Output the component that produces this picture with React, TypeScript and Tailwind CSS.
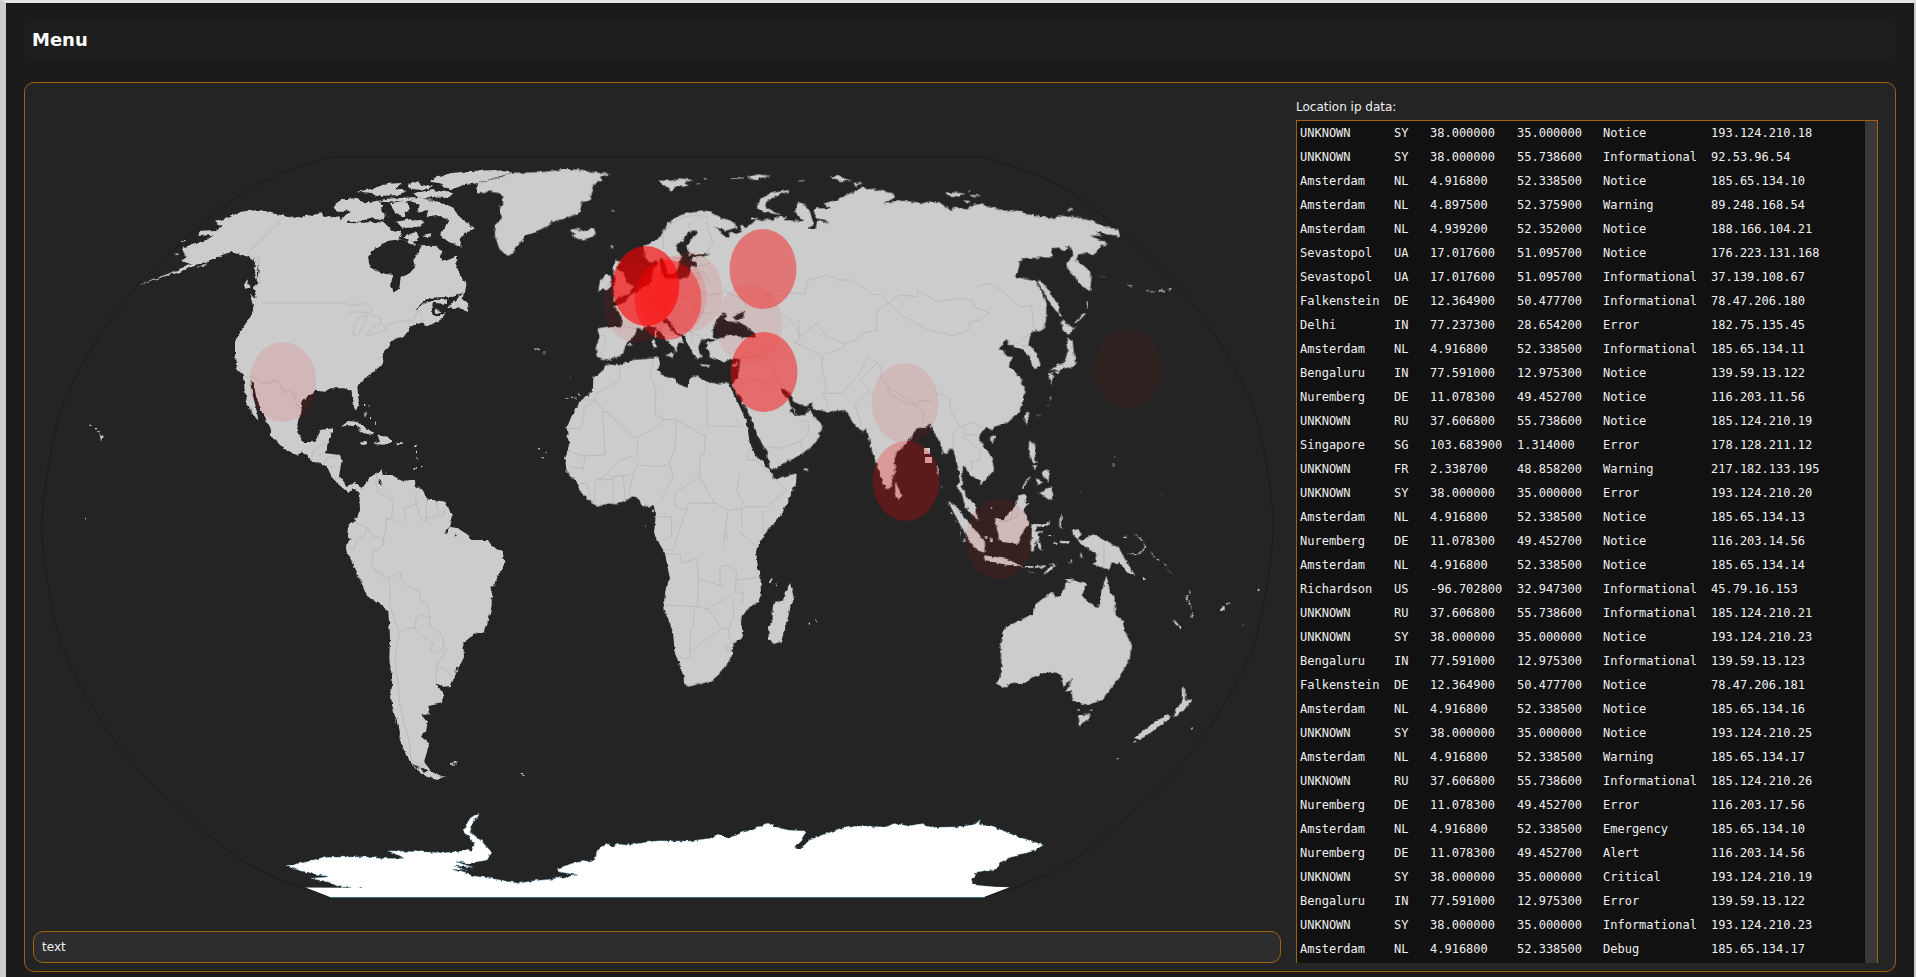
import React from "react";

type Row = [string, string, string, string, string, string];

const rows: Row[] = [
  ["UNKNOWN", "SY", "38.000000", "35.000000", "Notice", "193.124.210.18"],
  ["UNKNOWN", "SY", "38.000000", "55.738600", "Informational", "92.53.96.54"],
  ["Amsterdam", "NL", "4.916800", "52.338500", "Notice", "185.65.134.10"],
  ["Amsterdam", "NL", "4.897500", "52.375900", "Warning", "89.248.168.54"],
  ["Amsterdam", "NL", "4.939200", "52.352000", "Notice", "188.166.104.21"],
  ["Sevastopol", "UA", "17.017600", "51.095700", "Notice", "176.223.131.168"],
  ["Sevastopol", "UA", "17.017600", "51.095700", "Informational", "37.139.108.67"],
  ["Falkenstein", "DE", "12.364900", "50.477700", "Informational", "78.47.206.180"],
  ["Delhi", "IN", "77.237300", "28.654200", "Error", "182.75.135.45"],
  ["Amsterdam", "NL", "4.916800", "52.338500", "Informational", "185.65.134.11"],
  ["Bengaluru", "IN", "77.591000", "12.975300", "Notice", "139.59.13.122"],
  ["Nuremberg", "DE", "11.078300", "49.452700", "Notice", "116.203.11.56"],
  ["UNKNOWN", "RU", "37.606800", "55.738600", "Notice", "185.124.210.19"],
  ["Singapore", "SG", "103.683900", "1.314000", "Error", "178.128.211.12"],
  ["UNKNOWN", "FR", "2.338700", "48.858200", "Warning", "217.182.133.195"],
  ["UNKNOWN", "SY", "38.000000", "35.000000", "Error", "193.124.210.20"],
  ["Amsterdam", "NL", "4.916800", "52.338500", "Notice", "185.65.134.13"],
  ["Nuremberg", "DE", "11.078300", "49.452700", "Notice", "116.203.14.56"],
  ["Amsterdam", "NL", "4.916800", "52.338500", "Notice", "185.65.134.14"],
  ["Richardson", "US", "-96.702800", "32.947300", "Informational", "45.79.16.153"],
  ["UNKNOWN", "RU", "37.606800", "55.738600", "Informational", "185.124.210.21"],
  ["UNKNOWN", "SY", "38.000000", "35.000000", "Notice", "193.124.210.23"],
  ["Bengaluru", "IN", "77.591000", "12.975300", "Informational", "139.59.13.123"],
  ["Falkenstein", "DE", "12.364900", "50.477700", "Notice", "78.47.206.181"],
  ["Amsterdam", "NL", "4.916800", "52.338500", "Notice", "185.65.134.16"],
  ["UNKNOWN", "SY", "38.000000", "35.000000", "Notice", "193.124.210.25"],
  ["Amsterdam", "NL", "4.916800", "52.338500", "Warning", "185.65.134.17"],
  ["UNKNOWN", "RU", "37.606800", "55.738600", "Informational", "185.124.210.26"],
  ["Nuremberg", "DE", "11.078300", "49.452700", "Error", "116.203.17.56"],
  ["Amsterdam", "NL", "4.916800", "52.338500", "Emergency", "185.65.134.10"],
  ["Nuremberg", "DE", "11.078300", "49.452700", "Alert", "116.203.14.56"],
  ["UNKNOWN", "SY", "38.000000", "35.000000", "Critical", "193.124.210.19"],
  ["Bengaluru", "IN", "77.591000", "12.975300", "Error", "139.59.13.122"],
  ["UNKNOWN", "SY", "38.000000", "35.000000", "Informational", "193.124.210.23"],
  ["Amsterdam", "NL", "4.916800", "52.338500", "Debug", "185.65.134.17"],
];

// Each region keeps its own local frame at three units per map unit.
type Region = { at: string; land: string[]; sea?: string[]; borders?: string[] };

const regions: Region[] = [
  {
    // North America
    at: "translate(40 140) scale(0.33333)",
    land: [
      "M640,210 L690,218 735,228 765,236 800,228 845,220 850,230 885,228 905,238 925,240 920,248 950,250 1000,245 1045,250 1085,280 1075,295 1100,305 1120,290 1150,318 1190,315 1205,335 1200,355 1215,362 1240,340 1248,350 1250,380 1262,408 1280,430 1275,455 1240,470 1170,473 1150,485 1118,515 1155,490 1185,480 1225,478 1220,492 1180,488 1175,500 1178,525 1195,530 1215,520 1210,535 1165,558 1152,560 1155,545 1110,560 1098,585 1060,600 1045,620 1030,640 1025,675 1000,695 960,725 952,740 957,790 948,812 938,790 935,755 920,745 870,745 855,755 825,752 795,775 783,790 785,815 772,850 775,880 790,907 828,905 842,870 880,865 868,895 855,940 900,945 905,960 897,1010 920,1038 945,1028 970,1050 965,1068 940,1045 925,1058 880,1020 860,978 820,965 790,937 770,945 730,925 690,885 692,865 665,815 650,775 640,730 630,720 637,760 650,810 655,842 640,825 617,785 620,775 613,745 612,705 590,685 585,650 585,605 600,575 635,525 640,500 630,465 650,475 640,440 652,430 640,400 645,370 628,350 600,345 580,335 560,340 510,360 460,375 425,363 440,350 430,340 428,322 500,300 520,285 475,288 480,272 530,270 545,262 525,245 560,235 600,215Z",
      "M295,436 L330,424 380,403 430,383 470,364 510,350 520,356 470,374 420,396 370,410 330,426Z",
      "M402,342 L416,340 414,346Z M422,304 L434,302 432,308Z M468,382 L500,370 488,382Z M480,382 500,376 490,384Z",
      "M878,200 L910,178 950,175 975,190 1010,182 1030,195 1022,215 1050,235 1040,243 990,235 950,247 905,237 930,212 890,212Z",
      "M950,155 L990,148 1040,132 1090,128 1062,143 1100,152 1080,165 1010,168 990,158Z",
      "M1010,182 L1040,176 1120,172 1180,178 1120,182 1060,184Z",
      "M1170,125 L1190,112 1230,100 1290,93 1370,90 1415,98 1370,112 1310,130 1270,136 1230,150 1200,130Z",
      "M1120,158 L1180,150 1240,160 1225,174 1130,170Z M1100,135 L1130,122 1145,135 1180,140 1150,150 1110,146Z",
      "M1105,185 L1150,178 1200,185 1240,205 1260,235 1305,265 1275,280 1258,300 1262,320 1225,305 1200,285 1215,262 1225,240 1190,225 1160,230 1165,210 1130,215 1140,195Z",
      "M1050,190 L1095,182 1110,205 1090,230 1065,220Z M1070,245 L1110,238 1155,245 1130,264 1085,262Z M1090,292 L1125,275 1135,295 1110,303Z",
      "M1150,285 L1175,280 1165,295Z M1180,190 1215,195 1200,215Z",
      "M1225,503 L1250,475 1272,455 1268,480 1285,490 1280,517 1265,505 1240,507Z M1185,505 1205,515 1190,520Z",
      "M612,435 L622,418 628,440 616,447Z",
      "M903,860 L925,843 955,847 1002,880 998,886 970,880 945,855 915,858Z",
      "M1012,886 L1045,890 1060,905 1035,914 1000,912 1020,905Z M960,907 h18 v7 h-14Z M1070,907 h18 v6 h-18Z",
      "M178,882 L192,890 183,900Z M148,854 h6 v4 h-6Z M165,864 h6 v4 h-6Z M173,874 h10 v3 h-10Z",
      "M972,792 h4 v8 h-4Z M985,796 h3 v6 h-3Z M973,818 h4 v12 h-4Z M990,830 h3 v8 h-3Z M1005,848 h3 v6 h-3Z M1125,915 h3 v6 h-3Z M1128,935 h3 v8 h-3Z M1131,952 h3 v6 h-3Z M1143,978 h4 v4 h-4Z M1120,985 h8 v4 h-8Z M1485,627 h12 v4 h-12Z M1495,924 h4 v4 h-4Z M135,1134 h4 v4 h-4Z",
    ],
    sea: [
      "M985,355 L1005,325 1045,302 1085,298 1110,312 1145,318 1120,360 1125,380 1110,400 1082,412 1078,445 1062,458 1050,438 1060,405 1020,398 990,382Z",
      "M1130,318 L1118,305 1150,298 1190,302 1215,318 1245,320 1248,350 1215,364 1200,352 1205,335 1188,318 1145,316Z",
      "M1035,225 L1060,240 1075,262 1100,270 1060,275 1030,245 Z",
      "M640,350 L646,400 638,440 634,400Z M652,360 L656,395 650,420Z",
      "M1310,142 L1370,148 1390,160 1385,153 1330,140Z",
    ],
    borders: [
      "M622,340 L735,228 M622,340 L640,352 660,350 652,380 662,430 640,445 M665,488 L912,488 935,498 975,488 995,505 990,522 960,515 925,518 M940,585 L942,560 955,530 985,528 970,550 955,585Z M995,525 L1020,532 1025,550 1000,560 978,588 1040,568 1030,558 1075,545 1120,540 1130,515 1145,515 1145,548",
      "M613,712 L635,710 670,730 695,728 700,720 715,725 732,758 750,752 762,760 770,795 785,805",
      "M815,950 L822,930 845,912 860,912 M832,945 L850,940 M850,975 L862,955 900,945 M868,985 L885,975 M900,1015 L880,1018",
    ],
  },
  {
    // South America
    at: "translate(320 420) scale(0.33333)",
    land: [
      "M118,212 L135,195 145,175 185,150 188,165 215,165 245,182 288,180 285,195 305,210 325,238 375,245 385,262 397,295 390,320 412,325 440,338 455,360 500,360 530,388 548,393 553,430 546,450 530,470 522,497 515,500 515,560 505,600 490,635 465,638 430,670 432,712 415,745 392,798 370,800 348,790 372,825 365,850 325,858 330,883 305,885 320,905 315,935 303,950 327,970 320,1000 312,1025 335,1055 370,1070 352,1080 320,1070 285,1045 260,1010 240,960 225,890 213,838 217,780 208,720 210,650 205,575 185,555 150,535 135,515 110,455 95,420 80,400 78,375 92,360 82,345 85,315 100,305 120,272Z",
      "M392,1026 h9 v8 h-9Z M404,1025 L414,1027 404,1035Z M598,1061 L608,1062 618,1070 606,1066Z M362,1068 L378,1070 362,1073Z M315,903 h8 v6 h-8Z",
      "M655,84 h4 v4 h-4Z M675,95 h5 v5 h-5Z M662,112 h10 v3 h-10Z M147,782 h3 v3 h-3Z M195,155 h5 v3 h-5Z M268,180 h18 v8 h-18Z",
    ],
    sea: [
      "M176,178 L184,180 184,195 176,190Z M386,318 L374,342 383,340Z M408,338 L404,352 410,352Z M410,740 L404,760 416,742Z M232,895 L240,940 236,960 228,915Z M245,985 L262,1012 255,1010Z M275,1030 L300,1045 290,1046Z M305,1040 L325,1055 310,1058Z",
    ],
    borders: [
      "M170,165 L168,190 175,220 215,235 218,265 215,295 195,300 200,320 192,350 190,378 160,395 155,430 168,455 190,460 190,472 212,473 240,455 245,480 270,500 297,512 302,543 318,548 328,570 328,595 M215,295 L240,310 260,290 252,265 290,252 285,225 305,205 M290,255 L298,280 305,300 320,302 318,270 322,240 M320,295 L350,288 355,270 345,240 M350,288 L368,288 375,265 M195,300 L205,295",
      "M100,305 L140,322 135,345 110,360 102,388 85,380 M140,322 L162,350 190,355 190,378 M205,473 L210,510 210,560 225,600 238,640 228,690 225,730 235,790 238,850 250,900 262,940 270,980 272,1020 310,1035 M238,635 L260,625 285,625 288,595 300,585 328,590 330,622 358,635 370,660 370,685 350,700 332,695 338,668 300,645 285,625 M370,675 L380,690 350,735 348,790 M350,738 L375,748 398,770",
    ],
  },
  {
    // Europe, Asia and Greenland
    at: "translate(480 140) scale(0.33333)",
    land: [
      "M-10,130 L60,112 95,98 130,98 190,96 250,88 310,90 345,97 392,102 360,110 365,120 340,135 330,165 335,180 305,186 300,215 270,232 215,245 205,258 140,285 110,320 92,347 60,332 45,290 45,255 65,235 60,200 70,185 62,160 30,155 -10,157Z",
      "M268,270 L290,266 310,273 342,265 348,282 308,302 278,290 285,280Z",
      "M535,122 L575,122 600,115 640,120 612,128 628,140 590,140 575,152 555,140Z M650,128 h10 v3 h-10Z M672,115 h8 v3 h-8Z M753,112 L790,112 790,115 755,116Z M800,112 L835,103 870,108 850,112 820,120Z",
      "M928,150 L870,160 840,178 830,205 858,218 905,225 880,212 855,202 860,185 890,165 925,156Z M815,232 h14 v6 h-14Z",
      "M1050,110 L1075,108 1113,122 1080,123Z M1120,128 L1150,130 1125,137Z M955,122 h16 v2 h-16Z",
      "M490,320 L530,300 545,283 560,255 580,235 620,218 655,212 690,216 720,232 760,245 770,262 740,272 700,260 715,268 735,292 752,292 745,280 785,277 780,255 800,265 812,250 830,240 880,238 900,230 925,230 910,240 970,243 945,215 955,185 978,195 990,215 1000,250 985,264 1010,266 1015,240 1048,252 1035,240 1012,235 1000,215 1005,205 1052,205 1030,190 1070,180 1110,160 1145,142 1200,152 1240,160 1245,172 1210,192 1265,182 1340,190 1350,183 1375,185 1415,213 1425,203 1465,208 1475,195 1500,192 1540,202 1570,212 1610,210 1640,222 1690,230 1725,237 1730,226 1790,232 1830,242 1880,262 1915,268 1920,290 1880,282 1845,270 1865,288 1830,285 1885,312 1862,318 1840,345 1825,340 1795,342 1788,362 1815,380 1835,408 1830,458 1795,425 1765,388 1762,370 1778,345 1770,318 1757,315 1765,325 1755,335 1735,322 1715,325 1718,352 1625,355 1612,390 1605,410 1640,418 1670,425 1690,465 1700,490 1698,540 1690,568 1675,575 1662,570 1650,590 1645,615 1670,640 1682,675 1660,687 1650,650 1630,632 1620,625 1600,615 1585,615 1588,605 1578,598 1556,628 1572,632 1575,645 1600,648 1587,675 1620,712 1628,735 1634,745 1630,780 1615,820 1580,850 1540,860 1535,872 1520,862 1500,880 1498,902 1535,950 1542,990 1520,1015 1502,1040 1500,1022 1470,1005 1450,975 1446,1010 1445,1040 1460,1070 1485,1090 1495,1140 1480,1130 1455,1098 1445,1060 1432,1045 1440,1010 1432,975 1420,930 1410,925 1400,942 1388,938 1385,915 1360,875 1350,850 1340,860 1310,865 1280,910 1250,940 1243,960 1245,1000 1230,1045 1217,1048 1195,990 1175,930 1160,865 1147,875 1120,850 1095,810 1045,815 1000,808 985,808 975,825 950,828 935,800 930,815 945,828 960,830 990,812 1000,830 1030,855 1010,900 990,925 960,945 920,965 880,988 870,985 860,935 830,880 815,840 795,800 775,765 762,745 752,732 770,715 778,690 780,657 755,655 735,665 700,657 680,640 680,610 700,600 690,595 662,600 655,625 665,655 645,655 635,630 622,610 615,590 590,575 570,545 555,535 550,545 575,570 605,595 612,608 595,605 590,630 582,640 585,625 560,600 530,565 510,555 485,568 470,563 468,580 435,620 430,640 395,658 380,662 350,650 348,620 358,590 352,565 385,560 425,563 428,540 415,515 400,500 440,485 445,470 470,455 495,440 515,425 518,390 535,368 530,362 505,370 495,350Z",
      "M400,490 L415,470 452,462 460,440 440,425 428,395 410,392 420,365 402,362 400,400 410,425 400,440 402,455Z M355,453 L360,420 375,405 392,407 395,425 388,445Z",
      "M518,600 h10 v22 h-10Z M524,570 h6 v20 h-6Z M555,642 L580,640 580,655Z M660,672 L690,675 690,680 665,678Z M752,678 L775,666 768,680Z M445,612 h8 v5 h-8Z",
      "M1245,1025 L1265,1062 1255,1080 1246,1070Z M1372,980 h4 v22 h-4Z M1386,1040 h3 v3 h-3Z",
      "M1745,538 L1762,552 1786,562 1770,582 1748,575Z M1760,592 L1778,605 1782,640 1790,672 1770,684 1755,680 1740,694 1722,688 1702,698 1725,680 1750,668 1766,640Z M1703,700 L1720,700 1714,732 1708,715Z M1722,696 L1742,692 1732,704Z",
      "M1670,418 L1685,425 1705,450 1735,495 1738,525 1710,490Z M1722,500 L1748,530 1738,528Z",
      "M1640,815 L1648,818 1640,857 1633,840Z M1530,893 L1548,885 1536,910Z M1648,905 L1664,910 1668,935 1662,960 1678,968 1655,966 1645,930Z M1655,975 L1672,980 1665,990Z M1685,995 L1710,990 1705,1025 1690,1010Z M1670,1015 L1690,1025 1675,1035Z M1678,1062 L1712,1038 1720,1065 1714,1082 1695,1068Z M1625,1042 L1648,1010 1650,1012 1630,1045Z",
      "M1398,157 L1455,160 1440,170 1408,167Z M1470,165 h30 v4 h-30Z M1445,180 L1472,184 1460,190Z M1465,150 h5 v4 h-5Z M1757,210 L1770,206 1782,211Z M1738,300 h18 v3 h-18Z",
      "M1860,405 L1885,412 1870,410Z M1945,435 h12 v3 h-12Z M1998,448 h6 v3 h-6Z M2012,455 h14 v2 h-14Z M2036,450 h20 v4 h-20Z M2066,445 h10 v4 h-10Z M1820,485 h3 v20 h-3Z M1810,520 L1818,520 1790,550 1785,550Z M1710,770 h3 v12 h-3Z M1702,795 h4 v4 h-4Z M1668,825 h12 v2 h-12Z M1905,950 h3 v3 h-3Z M1898,973 h4 v4 h-4Z M2046,1064 h3 v3 h-3Z M1803,1055 h3 v3 h-3Z",
      "M165,626 h14 v5 h-14Z M190,638 h6 v3 h-6Z M266,708 h4 v3 h-4Z M393,315 h6 v10 h-6Z M393,210 h8 v3 h-8Z M972,986 h12 v4 h-12Z",
    ],
    sea: [
      "M625,275 L648,275 650,282 632,300 622,318 626,345 655,343 692,342 665,350 640,352 632,362 650,368 650,382 635,376 628,405 605,417 580,417 555,416 545,395 538,360 545,352 558,378 562,400 575,402 590,395 598,370 605,345 590,332 592,312 615,295Z",
      "M700,590 L698,565 715,530 735,520 742,530 730,535 750,548 775,545 800,560 825,580 828,592 790,592 745,585 712,597Z M758,528 L797,513 785,535 768,542Z",
      "M905,745 L925,752 940,785 975,800 995,787 1000,808 985,806 975,825 950,826 945,808 932,800 925,775 908,762Z",
      "M682,600 L700,597 710,600 690,606Z M668,655 L675,615 665,605 690,640 685,655Z",
    ],
    borders: [
      "M550,325 L550,280 575,250 610,232 650,225 685,232 M632,280 L625,250 M680,240 L690,285 700,310 680,335 M640,400 L670,395 690,430 M650,380 L690,370 M670,400 L640,430 M640,450 L690,465 730,460 740,440 M575,460 L620,475 650,490 640,515 600,530 M640,515 L690,520 M430,560 L470,566 M362,585 L378,590 370,625 360,645 M520,500 L560,510 M500,430 L510,490 M530,430 L535,480 M580,430 L590,465 M735,455 L790,480 800,500 M615,565 L660,590 M630,570 L640,610",
      "M870,490 L862,465 900,450 925,458 975,462 985,420 1040,405 1075,420 1115,420 1180,465 1200,462 1225,488 1260,465 1310,470 1315,452 1370,485 1440,475 1480,482 1480,500 1528,518 1500,540 1470,545 1468,568 1420,587 1345,570 1300,545 1270,530 1225,488 M1490,440 L1530,430 1570,455 1620,500 1655,498 1660,560 M1225,488 L1190,515 1190,570 1145,580 1130,600 1095,610 M955,540 L960,590 1010,550 1040,590 1095,610 1090,625 1040,640 M905,520 L945,555 960,595 945,610 M890,625 L920,650 M940,605 L1030,650 1025,680 1040,745 1030,760 1048,810 M1030,760 L1085,760 1140,700 1165,650 1205,680 1200,710 1225,740 1310,795 1320,780 1350,785 M1225,740 L1225,760 1280,790 1310,795 M1145,860 L1125,795 1170,750 1140,720 1195,665",
      "M1310,800 L1330,815 1330,850 M1350,785 L1375,760 1410,775 1410,810 1440,860 1480,845 1505,865 M1440,860 L1420,880 1420,930 M1450,860 L1450,890 1500,930 1500,960 1475,965 1475,990 M1455,885 L1490,885 M1610,610 L1650,580 M1625,615 L1645,620",
      "M775,655 L850,645 880,680 890,720 905,745 M775,735 L830,715 890,750 M860,920 L900,925 960,905 985,880 985,845 960,840 M960,905 L970,930 M850,620 L885,630",
      "M1556,1145 L1590,1140 1605,1105",
    ],
  },
  {
    // Africa
    at: "translate(550 340) scale(0.33333)",
    land: [
      "M167,72 L205,76 250,60 310,55 325,50 330,72 323,92 345,110 375,115 382,130 410,143 420,115 440,107 470,125 510,133 535,128 545,150 560,180 590,245 598,300 615,345 640,368 660,390 672,417 740,400 738,430 715,480 690,530 645,580 630,605 618,635 625,690 632,710 632,765 625,785 590,810 572,838 577,870 575,895 548,913 545,950 510,1000 485,1023 415,1040 402,1030 400,1000 375,940 368,870 340,805 347,745 360,715 352,680 345,640 325,605 312,578 318,520 310,498 280,500 265,475 245,472 200,493 175,490 140,500 90,455 80,425 50,395 45,355 57,315 50,265 70,215 95,180 128,155 130,115 160,90Z",
      "M720,728 L732,775 722,800 705,870 692,905 672,912 657,900 655,868 668,840 668,795 700,775Z",
      "M45,172 h10 v4 h-10Z M60,168 h6 v6 h-6Z M72,172 h8 v3 h-8Z M84,160 h5 v6 h-5Z M306,510 h6 v6 h-6Z M286,556 h4 v4 h-4Z M776,848 h6 v6 h-6Z M797,838 h5 v5 h-5Z M660,718 h4 v8 h-4Z M676,734 h5 v4 h-5Z M762,386 h12 v4 h-12Z",
    ],
    sea: ["M543,150 L562,180 566,160 572,172 562,186Z"],
    borders: [
      "M208,76 L210,120 165,145 137,162 137,185 103,200 100,238 93,265 50,266 M137,185 L255,295 318,262 342,238 315,225 318,150 300,110 310,60 M137,180 L103,180 M158,215 L165,345 100,348 60,335 M158,215 L175,218 M263,297 L262,345 210,360 175,395 165,408 M342,238 L380,240 375,325 358,370 330,380 260,375 250,400 240,440 236,470 M380,240 L465,288 463,340 450,350 448,410 375,460 M470,128 L472,258 575,260 M463,288 L470,285 M600,320 L590,360 620,360 650,390 710,450 650,500 585,500 560,450 570,400",
      "M190,410 L190,490 M220,408 L225,475 M190,410 L240,405 M135,420 L135,490 M60,380 L100,385 105,350 M90,430 L110,430 120,470 M165,408 L140,420 190,418 M330,485 L370,410 358,370 M375,460 L375,500 410,510 385,580 370,630 345,628 M320,530 L365,530 365,590 340,600 M410,510 L415,490 500,490 535,510 525,575 520,620 M448,410 L495,490 M535,510 L575,505 M575,500 L575,560 M568,575 L620,620 M638,510 L640,580",
      "M345,642 L390,642 395,670 440,655 445,715 520,740 M445,715 L443,800 342,795 M443,800 L475,808 550,760 M510,740 L510,680 530,675 560,695 555,755 580,760 575,795 M560,720 L630,712 M475,808 L515,865 535,868 552,830 550,790 M433,808 L430,865 422,865 420,950 405,958 390,950 M425,932 L450,912 515,865 M535,868 L543,910 M530,920 L540,918 543,935 530,935Z M515,590 L530,580 532,600",
    ],
  },
  {
    // Oceania
    at: "translate(900 500) scale(0.33333)",
    land: [
      "M305,565 L290,550 305,515 303,460 300,430 315,385 350,365 395,345 410,310 455,275 470,290 485,287 500,247 525,240 562,250 545,287 590,325 600,310 610,255 620,228 630,275 643,290 647,345 668,362 672,390 693,430 690,475 660,530 605,600 565,615 545,610 518,605 515,572 495,575 518,535 490,562 483,525 460,515 430,520 400,530 375,548 335,550Z",
      "M538,645 L572,643 555,668 535,680Z M495,238 L522,236 515,243 498,243Z",
      "M848,557 L856,570 855,598 878,600 850,632 822,652 828,625 848,605Z M803,642 L812,650 770,685 720,720 702,713 745,680Z M700,722 h8 v5 h-8Z",
      "M515,90 L535,88 545,105 530,112 545,122 580,103 615,122 655,140 668,165 682,190 705,225 685,218 660,190 635,187 630,207 610,205 578,192 590,180 588,160 548,137 540,125 520,105Z",
      "M680,160 L710,163 728,150 733,128 737,140 725,158 705,166Z M670,107 h10 v4 h-10Z M700,100 L725,118 732,128 722,120Z",
      "M285,55 L312,58 350,10 358,-15 375,-18 380,8 388,10 370,30 387,68 372,90 355,132 335,130 300,125 290,85Z",
      "M143,3 L165,15 200,60 238,105 255,125 253,158 230,150 200,110 165,45Z",
      "M250,165 L320,176 345,188 372,202 325,195 255,180Z M375,198 L400,198 400,203 375,203Z M405,198 L438,196 435,202 405,203Z M445,192 L475,188 460,195Z M430,225 L445,205 470,195 455,210Z M385,210 L400,220 388,216Z",
      "M398,72 L440,72 450,60 448,76 412,80 405,95 432,92 412,102 428,152 418,148 408,120 400,157 393,150 395,95Z",
      "M460,125 h10 v6 h-10Z M480,122 L508,124 505,131 480,128Z M478,55 h5 v30 h-5Z M484,45 h4 v14 h-4Z M541,158 h5 v16 h-5Z M508,182 L515,178 512,192Z M445,105 h14 v3 h-14Z",
      "M750,152 L765,175 758,170Z M770,172 L780,182 773,180Z M790,185 L805,200 795,195Z M800,205 L822,228 808,215Z M728,235 h8 v5 h-8Z M858,285 h5 v16 h-5Z M868,270 h3 v10 h-3Z M866,300 h5 v14 h-5Z M873,320 h3 v8 h-3Z M875,340 h3 v12 h-3Z M822,358 L845,385 840,388 824,370Z M962,322 h12 v9 h-12Z M978,312 L992,305 985,314Z M1073,267 h6 v4 h-6Z M1025,372 h4 v3 h-4Z M873,682 h5 v6 h-5Z M651,774 h5 v4 h-5Z M535,627 h4 v5 h-4Z M572,628 h4 v8 h-4Z",
      "M152,40 h5 v5 h-5Z M165,60 L172,70 168,70Z M178,90 L186,103 182,103Z M192,118 h4 v8 h-4Z M270,115 h8 v8 h-8Z M256,108 h6 v8 h-6Z M275,22 h5 v4 h-5Z",
    ],
    borders: ["M612,122 L612,205", "M297,62 L325,62 350,50 355,20"],
  },
];

type Point = [number, number];

const leftTop: Point[] = [
  [330, 157], [283, 173], [240, 195], [197, 229], [137, 286], [97, 340], [65, 400], [50, 457], [42, 527],
];
const leftSide: Point[] = [
  ...leftTop,
  ...leftTop.slice(0, -1).reverse().map(([x, y]): Point => [x, 1054 - y]),
];
const rightSide: Point[] = leftSide.map(([x, y]): Point => [1315 - x, 1054 - y]);

// Catmull-Rom spline through the points, written as cubic segments.
function spline(pts: Point[]) {
  let d = "";
  for (let i = 0; i < pts.length - 1; i++) {
    const a = pts[i - 1] ?? pts[i];
    const b = pts[i];
    const c = pts[i + 1];
    const e = pts[i + 2] ?? c;
    d += ` C${b[0] + (c[0] - a[0]) / 6},${b[1] + (c[1] - a[1]) / 6} ${c[0] - (e[0] - b[0]) / 6},${c[1] - (e[1] - b[1]) / 6} ${c[0]},${c[1]}`;
  }
  return d;
}
const outline = `M330,157${spline(leftSide)} L985,897${spline(rightSide)} Z`;

const hits = [
  { x: 283, y: 382, a: 0.1 },
  { x: 637, y: 303, a: 0.09 },
  { x: 689, y: 292, a: 0.09 },
  { x: 673, y: 296, a: 0.12 },
  { x: 668, y: 300, a: 0.4 },
  { x: 646, y: 286, a: 0.62 },
  { x: 749, y: 324, a: 0.07 },
  { x: 763, y: 269, a: 0.42 },
  { x: 764, y: 372, a: 0.47 },
  { x: 905, y: 403, a: 0.09 },
  { x: 906, y: 481, a: 0.25 },
  { x: 999, y: 539, a: 0.09 },
  { x: 1128, y: 369, a: 0.06 },
];

function WorldMap() {
  return (
    <svg viewBox="33 91 1248 832" className="block h-auto w-full" role="img" aria-label="World map">
      <defs>
        <filter
          id="coast"
          filterUnits="userSpaceOnUse"
          x="33"
          y="91"
          width="1248"
          height="832"
          colorInterpolationFilters="sRGB"
        >
          <feTurbulence type="fractalNoise" baseFrequency="0.2" numOctaves="2" seed="4" />
          <feDisplacementMap in="SourceGraphic" scale="4" xChannelSelector="R" yChannelSelector="G" />
        </filter>
      </defs>
      <path d={outline} fill="none" stroke="#1a1a1a" strokeWidth="1" />
      <g filter="url(#coast)">
        {regions.map((r) => (
          <g key={r.at} transform={r.at}>
            <path d={r.land.join(" ")} fill="#cccccc" fillRule="nonzero" />
            {r.sea && <path d={r.sea.join(" ")} fill="#242424" />}
          </g>
        ))}
        <path
          transform="translate(260 780) scale(0.52296 0.33333)"
          fill="#ffffff"
          stroke="#3d7f99"
          strokeWidth="1"
          d="M50,258 L90,245 120,232 200,230 230,235 275,235 245,212 310,215 350,218 405,210 410,190 388,150 398,120 420,98 408,125 402,155 425,185 442,215 435,240 400,250 375,245 408,262 372,258 395,272 368,268 410,288 450,297 495,310 520,302 555,298 605,285 570,275 570,265 600,248 640,240 645,210 665,190 672,200 685,192 700,195 760,182 820,183 860,175 875,162 895,175 920,158 945,148 970,128 990,142 1010,150 1045,153 1035,180 1022,205 1035,205 1050,180 1085,160 1110,145 1145,138 1195,140 1215,130 1240,138 1268,130 1275,142 1340,140 1368,132 1378,118 1375,133 1410,145 1440,165 1480,185 1498,195 1480,213 1440,228 1415,250 1408,268 1370,280 1358,300 1370,315 1400,320 1385,340 140,340 120,328 205,326 150,320 130,305 95,295 130,290 75,272Z"
        />
      </g>
      {regions.map((r) => (
        <g key={r.at} transform={r.at}>
          {r.borders && <path d={r.borders.join(" ")} fill="none" stroke="#b2b2b2" strokeWidth="2" strokeLinejoin="round" />}
        </g>
      ))}
      <path d="M305.5,887.5 L380,888 L970,886 L1009.5,887.3 L984,897 L330,897Z" fill="#ffffff" />
      <path d="M330 897.5 H985" stroke="#3d6b7d" strokeWidth="1" />
      <path d="M924,448 h6 v6 h-6Z M925,457 h7 v6 h-7Z" fill="#cccccc" />
      {hits.map((h) => (
        <ellipse key={`${h.x}-${h.y}`} cx={h.x} cy={h.y} rx="33.5" ry="40" fill="#ff0000" fillOpacity={h.a} />
      ))}
    </svg>
  );
}

export default function App() {
  return (
    <div className="min-h-screen border-t-3 border-r-2 border-l-6 border-t-[#e3e3e3] border-r-[#cccccc] border-l-[#cccccc] bg-[#1b1b1b] px-[18px] pt-[18px] pb-[5px] font-['DejaVu_Sans',sans-serif] text-xs text-[#f0f0f0]">
      <header className="flex h-[37px] items-center rounded-lg bg-[#1e1e1e] px-2">
        <h1 className="text-lg font-bold text-white">Menu</h1>
      </header>
      <main className="mt-6 flex rounded-[10px] border border-[#a0620f] bg-[#242424] p-2">
        <section className="flex min-w-0 flex-1 flex-col gap-2">
          <WorldMap />
          <input
            aria-label="Text"
            defaultValue="text"
            className="h-8 w-full rounded-[10px] border border-[#a0620f] bg-[#2d2d2d] px-2 text-xs text-[#f0f0f0] outline-none"
          />
        </section>
        <section className="mr-[9px] ml-[15px] flex w-[582px] shrink-0 flex-col">
          <h2 className="pt-2 pb-[5px] text-xs leading-4">Location ip data:</h2>
          <div className="flex flex-1 overflow-hidden border border-b-0 border-[#a0620f] bg-[#111111]">
            <div className="flex-1 pl-[3px]">
              <table
                aria-label="Location ip data"
                className="w-full table-fixed border-collapse font-['DejaVu_Sans_Mono',monospace] text-xs"
              >
                <colgroup>
                  <col className="w-[94px]" />
                  <col className="w-[36px]" />
                  <col className="w-[87px]" />
                  <col className="w-[86px]" />
                  <col className="w-[108px]" />
                  <col />
                </colgroup>
                <tbody>
                  {rows.map((row, i) => (
                    <tr key={i} className="h-6">
                      {row.map((cell, j) => (
                        <td key={j} className="p-0 whitespace-nowrap">
                          {cell}
                        </td>
                      ))}
                    </tr>
                  ))}
                </tbody>
              </table>
            </div>
            <div className="w-3 bg-[#383838]" />
          </div>
        </section>
      </main>
    </div>
  );
}
